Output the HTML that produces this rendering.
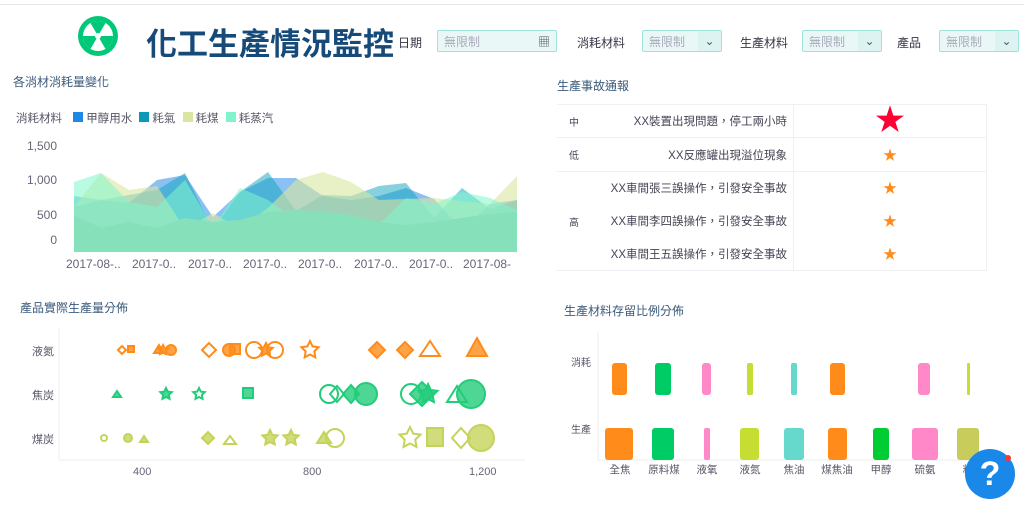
<!DOCTYPE html>
<html><head><meta charset="utf-8"><style>
body{margin:0;width:1024px;height:506px;overflow:hidden;background:#fff;font-family:"Liberation Sans","Noto Sans CJK TC",sans-serif;position:relative}
.a{position:absolute;white-space:nowrap}
.t{font-size:12px;color:#3a5a7a}
.sel{position:absolute;height:22px;border:1px solid #9ee3dc;background:#e9f8f6;border-radius:2px;font-size:12px;color:#aab;line-height:22px;box-sizing:border-box;padding-left:6px}
.sel b{position:absolute;right:0;top:0;width:23px;height:20px;background:#dcf3f1;font-weight:normal;color:#556;text-align:center;line-height:20px}
.lab{font-size:12px;color:#334}
td{border-bottom:1px solid #eef0f3;font-size:11.5px;color:#445}
</style></head><body>
<div style="position:absolute;left:0;top:4px;width:1024px;height:1px;background:#e4e6ea"></div>
<svg class="a" style="left:76px;top:14px" width="44" height="44" viewBox="-22 -22 44 44"><circle r="20" fill="#00c878"/><circle r="15" fill="#fff"/><path d="M0 0 L-7.5 -13 A15 15 0 0 1 7.5 -13Z M0 0 L15 0 A15 15 0 0 1 7.5 13Z M0 0 L-7.5 13 A15 15 0 0 1 -15 0Z" fill="#00c878"/><circle r="3" fill="#fff"/></svg>
<div class="a" style="left:146px;top:19px;font-size:31px;font-weight:bold;color:#164a78">化工生產情況監控</div>
<div class="a lab" style="left:398px;top:34px">日期</div>
<div class="sel" style="left:437px;top:30px;width:120px">無限制<span style="position:absolute;right:6px;top:0;color:#556">▦</span></div>
<div class="a lab" style="left:577px;top:34px">消耗材料</div>
<div class="sel" style="left:642px;top:30px;width:80px">無限制<b>⌄</b></div>
<div class="a lab" style="left:740px;top:34px">生產材料</div>
<div class="sel" style="left:802px;top:30px;width:80px">無限制<b>⌄</b></div>
<div class="a lab" style="left:897px;top:34px">產品</div>
<div class="sel" style="left:939px;top:30px;width:80px">無限制<b>⌄</b></div>

<div class="a t" style="left:13px;top:73px">各消材消耗量變化</div>
<div class="a" style="left:16px;top:110px;font-size:11.5px;color:#556">消耗材料 <span style="display:inline-block;width:10px;height:10px;background:#1e88e5;margin:0 3px 0 8px"></span>甲醇用水 <span style="display:inline-block;width:10px;height:10px;background:#0a9ab8;margin:0 3px 0 4px"></span>耗氣 <span style="display:inline-block;width:10px;height:10px;background:#d8e6a0;margin:0 3px 0 4px"></span>耗煤 <span style="display:inline-block;width:10px;height:10px;background:#80f5cc;margin:0 3px 0 4px"></span>耗蒸汽</div>
<div class="a" style="left:24px;top:140px;font-size:12px;color:#667;text-align:right;width:33px;line-height:1">1,500</div>
<div class="a" style="left:24px;top:173px;font-size:12px;color:#667;text-align:right;width:33px">1,000</div>
<div class="a" style="left:24px;top:208px;font-size:12px;color:#667;text-align:right;width:33px">500</div>
<div class="a" style="left:24px;top:233px;font-size:12px;color:#667;text-align:right;width:33px">0</div>
<svg class="a" style="left:0;top:0" width="520" height="280">
<polygon fill="#2b8ee8" fill-opacity=".55" points="74,252 74,207 101,200 129,203 157,180 185,175 213,217 240,192 268,178 296,178 323,196 351,200 379,196 406,188 434,199 462,229 490,204 517,200 517,252"/>
<polygon fill="#10a4be" fill-opacity=".5" points="74,252 74,196 101,200 129,195 157,190 185,173 213,230 240,192 268,172 296,211 323,195 351,196 379,186 406,183 434,218 462,188 490,209 517,200 517,252"/>
<polygon fill="#d8e6a0" fill-opacity=".6" points="74,252 74,207 101,173 129,190 157,186 185,229 213,213 240,229 268,208 296,180 323,172 351,182 379,200 406,199 434,198 462,201 490,204 517,176 517,252"/>
<polygon fill="#80f5cc" fill-opacity=".55" points="74,252 74,182 101,173 129,202 157,207 185,180 213,227 240,188 268,200 296,220 323,212 351,218 379,224 406,198 434,204 462,192 490,198 517,210 517,252"/>
<polygon fill="#86e0ba" points="74,252 74,215 101,228 129,222 157,228 185,218 213,222 240,220 268,212 296,210 323,212 351,215 379,222 406,225 434,222 462,218 490,214 517,212 517,252"/>
<g font-size="12" fill="#667">
<text x="66" y="268">2017-08-..</text><text x="132" y="268">2017-0..</text><text x="188" y="268">2017-0..</text><text x="243" y="268">2017-0..</text><text x="298" y="268">2017-0..</text><text x="354" y="268">2017-0..</text><text x="409" y="268">2017-0..</text><text x="463" y="268">2017-08-</text></g>
</svg>

<div class="a t" style="left:20px;top:299px">產品實際生產量分佈</div>
<div class="a" style="left:32px;top:343px;font-size:11px;color:#556">液氮</div>
<div class="a" style="left:32px;top:387px;font-size:11px;color:#556">焦炭</div>
<div class="a" style="left:32px;top:431px;font-size:11px;color:#556">煤炭</div>
<svg class="a" style="left:0;top:290px" width="530" height="216">
<defs><path id="st" vector-effect="non-scaling-stroke" d="M0,-1 L.29,-.4 .95,-.31 .48,.15 .59,.81 0,.5 -.59,.81 -.48,.15 -.95,-.31 -.29,-.4Z"/></defs>
<line x1="59" y1="38" x2="59" y2="170" stroke="#eee"/><line x1="59" y1="170" x2="525" y2="170" stroke="#eee"/>
<g font-size="11" fill="#667"><text x="133" y="185">400</text><text x="303" y="185">800</text><text x="469" y="185">1,200</text></g>
<g fill="#ff8c1a" fill-opacity=".8" stroke="#ff8c1a" stroke-width="2">
<rect x="128" y="56" width="6" height="6"/><path d="M154 63 l5 -8 5 8z"/><circle cx="171" cy="60" r="5"/><use href="#st" transform="translate(163 60) scale(5)"/>
<circle cx="229" cy="60" r="6"/><rect x="230" y="54" width="10" height="10"/><use href="#st" transform="translate(266 60) scale(7)"/>
<path d="M369 60 l8 -8 8 8 -8 8z"/><path d="M397 60 l8 -8 8 8 -8 8z"/><path d="M467 66 l10 -18 10 18z"/>
<g fill="none"><path d="M118 60 l4 -4 4 4 -4 4z"/><path d="M202 60 l7 -7 7 7 -7 7z"/><circle cx="254" cy="60" r="8"/><circle cx="275" cy="60" r="8"/><use href="#st" transform="translate(310 60) scale(9)"/><path d="M420 66 l10 -15 10 15z"/></g>
</g>
<g fill="#22cc7a" fill-opacity=".8" stroke="#22cc7a" stroke-width="2">
<path d="M113 107 l4 -6 4 6z"/><use href="#st" transform="translate(166 104) scale(6)"/><rect x="243" y="98" width="10" height="10"/>
<circle cx="366" cy="104" r="11"/><path d="M343 104 l8 -9 8 9 -8 9z"/><circle cx="471" cy="104" r="14"/><path d="M410 104 l12 -12 12 12 -12 12z"/><use href="#st" transform="translate(428 104) scale(10)"/>
<g fill="none"><use href="#st" transform="translate(199 104) scale(6)"/><circle cx="329" cy="104" r="9"/><path d="M330 104 l7 -8 7 8 -7 8z"/><circle cx="411" cy="104" r="10"/><path d="M447 112 l10 -16 10 16z"/></g>
</g>
<g fill="#c6d35a" fill-opacity=".8" stroke="#c6d35a" stroke-width="2">
<circle cx="128" cy="148" r="4"/><path d="M140 152 l4 -6 4 6z"/><path d="M202 148 l6 -6 6 6 -6 6z"/><use href="#st" transform="translate(270 148) scale(8)"/><use href="#st" transform="translate(291 148) scale(8)"/><path d="M317 153 l7 -11 7 11z"/>
<rect x="427" y="138" width="16" height="18"/><circle cx="481" cy="148" r="13"/>
<g fill="none"><circle cx="104" cy="148" r="3"/><path d="M224 154 l6 -8 6 8z"/><circle cx="335" cy="148" r="9"/><use href="#st" transform="translate(410 148) scale(11)"/><path d="M452 148 l9 -10 9 10 -9 10z"/></g>
</g>
</svg>

<div class="a t" style="left:557px;top:77px">生產事故通報</div>
<table class="a" style="left:557px;top:104px;width:430px;border-collapse:collapse;border-top:1px solid #eef0f3;border-right:1px solid #eef0f3">
<tr style="height:33px"><td style="width:30px;padding-left:12px;font-size:10px">中</td><td style="text-align:right;padding-right:6px;border-right:1px solid #eef0f3;width:186px">XX裝置出現問題，停工兩小時</td><td style="text-align:center;color:#ff0033;font-size:30px;line-height:20px">★</td></tr>
<tr style="height:34px"><td style="padding-left:12px;font-size:10px">低</td><td style="text-align:right;padding-right:6px;border-right:1px solid #eef0f3">XX反應罐出現溢位現象</td><td style="text-align:center;color:#ff8c1a;font-size:14px">★</td></tr>
<tr style="height:33px"><td rowspan="3" style="padding-left:12px;font-size:10px">高</td><td style="text-align:right;padding-right:6px;border:none;border-right:1px solid #eef0f3">XX車間張三誤操作，引發安全事故</td><td style="text-align:center;color:#ff8c1a;font-size:14px;border:none">★</td></tr>
<tr style="height:33px"><td style="text-align:right;padding-right:6px;border:none;border-right:1px solid #eef0f3">XX車間李四誤操作，引發安全事故</td><td style="text-align:center;color:#ff8c1a;font-size:14px;border:none">★</td></tr>
<tr style="height:33px"><td style="text-align:right;padding-right:6px;border-right:1px solid #eef0f3">XX車間王五誤操作，引發安全事故</td><td style="text-align:center;color:#ff8c1a;font-size:14px">★</td></tr>
</table>

<div class="a t" style="left:564px;top:302px">生產材料存留比例分佈</div>
<div class="a" style="left:571px;top:354px;font-size:10px;color:#556">消耗</div>
<div class="a" style="left:571px;top:421px;font-size:10px;color:#556">生產</div>
<svg class="a" style="left:540px;top:290px" width="484" height="216">
<line x1="58" y1="42" x2="58" y2="170" stroke="#eee"/><line x1="58" y1="170" x2="440" y2="170" stroke="#eee"/>
<g>
<rect x="72" y="73" width="15" height="32" rx="3" fill="#ff8c1a"/><rect x="115" y="73" width="16" height="32" rx="3" fill="#00cc66"/><rect x="162" y="73" width="9" height="32" rx="3" fill="#ff88c8"/><rect x="207" y="73" width="6" height="32" rx="2" fill="#c6dd33"/><rect x="251" y="73" width="6" height="32" rx="2" fill="#66d8cc"/><rect x="290" y="73" width="15" height="32" rx="3" fill="#ff8c1a"/><rect x="378" y="73" width="12" height="32" rx="3" fill="#ff88c8"/><rect x="427" y="73" width="3" height="32" rx="1" fill="#c6dd33"/>
<rect x="65" y="138" width="28" height="32" rx="3" fill="#ff8c1a"/><rect x="112" y="138" width="22" height="32" rx="3" fill="#00cc66"/><rect x="164" y="138" width="6" height="32" rx="2" fill="#ff88c8"/><rect x="200" y="138" width="19" height="32" rx="3" fill="#c6dd33"/><rect x="244" y="138" width="20" height="32" rx="3" fill="#66d8cc"/><rect x="288" y="138" width="19" height="32" rx="3" fill="#ff8c1a"/><rect x="333" y="138" width="16" height="32" rx="3" fill="#00cc33"/><rect x="372" y="138" width="26" height="32" rx="3" fill="#ff88c8"/><rect x="417" y="138" width="22" height="32" rx="3" fill="#c8cc5a"/>
</g>
<g font-size="10.5" fill="#556" text-anchor="middle"><text x="80" y="183">全焦</text><text x="124" y="183">原料煤</text><text x="167" y="183">液氧</text><text x="210" y="183">液氮</text><text x="254" y="183">焦油</text><text x="297" y="183">煤焦油</text><text x="341" y="183">甲醇</text><text x="385" y="183">硫氨</text><text x="428" y="183">粗</text></g>
</svg>
<div class="a" style="left:965px;top:449px;width:50px;height:50px;border-radius:50%;background:#1a88e8;color:#fff;font-size:34px;font-weight:bold;text-align:center;line-height:50px">?</div>
<div class="a" style="left:1005px;top:455px;width:6px;height:6px;border-radius:50%;background:#f33"></div>
</body></html>
